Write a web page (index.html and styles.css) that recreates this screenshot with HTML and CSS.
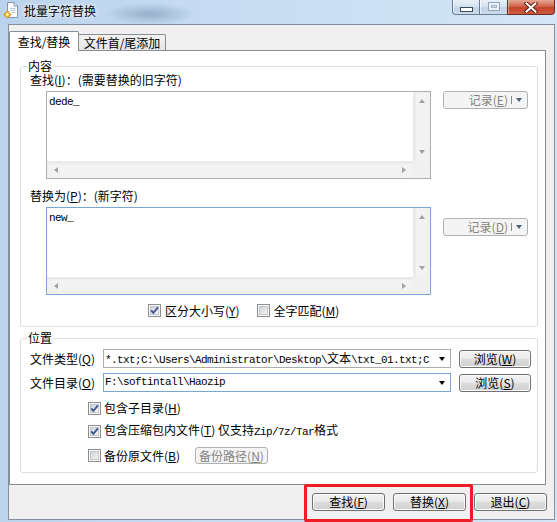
FILE: index.html
```html
<!DOCTYPE html>
<html lang="zh-CN">
<head>
<meta charset="utf-8">
<title>批量字符替换</title>
<link rel="stylesheet" href="styles.css">
</head>
<body>
<div class="window">
  <div class="titlebar">
    <svg class="app-icon" width="17" height="17" viewBox="0 0 17 17">
      <path d="M4.5 0.5 H11 L14.5 4 V15.5 H4.5 Z" fill="#fbfcfe" stroke="#8496b0"/>
      <path d="M11 0.5 V4 H14.5" fill="#dde6f1" stroke="#8496b0"/>
      <path d="M7 6.5 H12.5 M7 8.5 H12.5 M9 10.5 H12.5" stroke="#b8c8dc"/>
      <path d="M0.8 12.5 L4.5 8.8 L8.2 12.5 L4.5 16.2 Z" fill="#f6c12f" stroke="#c98a12" stroke-width="0.9"/>
      <path d="M3 12.5 L4.5 11 L6 12.5 L4.5 14 Z" fill="#ffffff"/>
    </svg>
    <span class="title">批量字符替换</span>
    <div class="controls">
      <div class="ctl ctl-min"><span class="min-glyph"></span></div>
      <div class="ctl ctl-max"><span class="max-glyph"></span></div>
      <div class="ctl ctl-close">
        <svg width="14" height="11" viewBox="0 0 14 11">
          <path d="M2.5 1.5 L11.5 9.5 M11.5 1.5 L2.5 9.5" stroke="#5a2116" stroke-width="4" stroke-linecap="square"/>
          <path d="M2.5 1.5 L11.5 9.5 M11.5 1.5 L2.5 9.5" stroke="#ffffff" stroke-width="2" stroke-linecap="square"/>
        </svg>
      </div>
    </div>
  </div>

  <div class="client">
    <div class="tabstrip">
      <div class="tab tab-active">查找/替换</div>
      <div class="tab tab-idle">文件首/尾添加</div>
    </div>

    <div class="panel">
      <fieldset class="group group-content">
        <legend>内容</legend>
        <div class="lbl">查找(<u>I</u>)：(需要替换的旧字符)</div>
        <div class="memo-row">
          <div class="memo">
            <div class="memo-text mono">dede_</div>
            <div class="vscroll"><span class="arr arr-up"></span><span class="arr arr-down"></span></div>
            <div class="hscroll"><span class="arr arr-left"></span><span class="arr arr-right"></span></div>
            <div class="corner"></div>
          </div>
          <div class="split-btn">
            <span>记录(<u>E</u>)</span><span class="sep"></span><span class="drop-arrow"></span>
          </div>
        </div>
        <div class="lbl lbl2">替换为(<u>P</u>)：(新字符)</div>
        <div class="memo-row">
          <div class="memo memo-focus">
            <div class="memo-text mono">new_</div>
            <div class="vscroll"><span class="arr arr-up"></span><span class="arr arr-down"></span></div>
            <div class="hscroll"><span class="arr arr-left"></span><span class="arr arr-right"></span></div>
            <div class="corner"></div>
          </div>
          <div class="split-btn split-btn-2">
            <span>记录(<u>D</u>)</span><span class="sep"></span><span class="drop-arrow"></span>
          </div>
        </div>
        <div class="check-row">
          <label class="check">
            <svg class="cb" width="13" height="13" viewBox="0 0 13 13"><rect x="0.5" y="0.5" width="12" height="12" fill="#f6f6f6" stroke="#8e8f8f"/><rect x="2.5" y="2.5" width="8" height="8" fill="url(#cbg)" stroke="#c3c7cc"/><path d="M3.2 6.4 L5.4 8.9 L9.9 3.4" fill="none" stroke="#3d5590" stroke-width="1.8"/></svg>
            <span>区分大小写(<u>Y</u>)</span>
          </label>
          <label class="check check-gap">
            <svg class="cb" width="13" height="13" viewBox="0 0 13 13"><rect x="0.5" y="0.5" width="12" height="12" fill="#f6f6f6" stroke="#8e8f8f"/><rect x="2.5" y="2.5" width="8" height="8" fill="url(#cbg)" stroke="#c3c7cc"/></svg>
            <span>全字匹配(<u>M</u>)</span>
          </label>
        </div>
      </fieldset>

      <fieldset class="group group-location">
        <legend>位置</legend>
        <div class="field-row">
          <span class="field-lbl">文件类型(<u>Q</u>)</span>
          <div class="combo">
            <span class="combo-text mono">*.txt;C:\Users\Administrator\Desktop\<span class="cjk">文本</span>\txt_01.txt;C</span>
            <span class="combo-arrow"></span>
          </div>
          <button class="btn btn-browse">浏览(<u>W</u>)</button>
        </div>
        <div class="field-row field-row-2">
          <span class="field-lbl">文件目录(<u>O</u>)</span>
          <div class="combo combo-focus">
            <span class="combo-text mono">F:\softintall\Haozip</span>
            <span class="combo-arrow"></span>
          </div>
          <button class="btn btn-browse">浏览(<u>S</u>)</button>
        </div>
        <label class="opt opt-a">
          <svg class="cb" width="13" height="13" viewBox="0 0 13 13"><rect x="0.5" y="0.5" width="12" height="12" fill="#f6f6f6" stroke="#8e8f8f"/><rect x="2.5" y="2.5" width="8" height="8" fill="url(#cbg)" stroke="#c3c7cc"/><path d="M3.2 6.4 L5.4 8.9 L9.9 3.4" fill="none" stroke="#3d5590" stroke-width="1.8"/></svg>
          <span>包含子目录(<u>H</u>)</span>
        </label>
        <label class="opt opt-b">
          <svg class="cb" width="13" height="13" viewBox="0 0 13 13"><rect x="0.5" y="0.5" width="12" height="12" fill="#f6f6f6" stroke="#8e8f8f"/><rect x="2.5" y="2.5" width="8" height="8" fill="url(#cbg)" stroke="#c3c7cc"/><path d="M3.2 6.4 L5.4 8.9 L9.9 3.4" fill="none" stroke="#3d5590" stroke-width="1.8"/></svg>
          <span>包含压缩包内文件(<u>T</u>) 仅支持<span class="mono-inline">Zip/7z/Tar</span>格式</span>
        </label>
        <div class="opt opt-c">
          <svg class="cb" width="13" height="13" viewBox="0 0 13 13"><rect x="0.5" y="0.5" width="12" height="12" fill="#f6f6f6" stroke="#8e8f8f"/><rect x="2.5" y="2.5" width="8" height="8" fill="url(#cbg)" stroke="#c3c7cc"/></svg>
          <span>备份原文件(<u>B</u>)</span>
          <button class="btn btn-disabled btn-backup">备份路径(<u>N</u>)</button>
        </div>
      </fieldset>
    </div>

    <div class="footer">
      <button class="btn btn-foot">查找(<u>F</u>)</button>
      <button class="btn btn-foot">替换(<u>X</u>)</button>
      <button class="btn btn-foot">退出(<u>C</u>)</button>
    </div>
  </div>

  <div class="highlight"></div>

  <svg class="defs" width="0" height="0">
    <defs>
      <linearGradient id="cbg" x1="0" y1="0" x2="1" y2="1">
        <stop offset="0" stop-color="#cdd1d6"/>
        <stop offset="1" stop-color="#f7f7f7"/>
      </linearGradient>
    </defs>
  </svg>
</div>
</body>
</html>
```

FILE: styles.css
```css
* { box-sizing: border-box; }

html, body {
  margin: 0;
  padding: 0;
}

body {
  width: 557px;
  height: 522px;
  overflow: hidden;
  background: #c4daf0;
  font-family: "Noto Sans CJK SC", "Noto Sans", sans-serif;
  font-size: 12px;
  line-height: 14px;
  color: #000;
}

.window {
  position: relative;
  width: 557px;
  height: 522px;
  display: flex;
  flex-direction: column;
  background: linear-gradient(to right, #bcd4ec, #c8ddf2 45%, #d2e5f7);
}

.defs { position: absolute; }

/* ---------- title bar ---------- */
.titlebar {
  height: 24px;
  display: flex;
  align-items: flex-start;
  background:
    radial-gradient(ellipse 45px 11px at 150px 14px, rgba(70, 100, 130, 0.35), rgba(70, 100, 130, 0) 100%),
    linear-gradient(to right, #bad3ec, #c6dcf2 40%, #d4e6f8);
}

.app-icon {
  margin: 2px 0 0 3px;
  flex: none;
}

.title {
  margin: 4px 0 0 4px;
  line-height: 14px;
  font-size: 12px;
  text-shadow: 0 0 6px rgba(255, 255, 255, 0.95), 0 0 3px rgba(255, 255, 255, 0.9);
}

.controls {
  margin-left: auto;
  margin-right: 2px;
  display: flex;
  height: 15px;
}

.ctl {
  height: 15px;
  display: flex;
  align-items: center;
  justify-content: center;
  border: 1px solid #6a7c93;
  border-top: none;
}

.ctl-min {
  width: 27px;
  border-right: none;
  border-bottom-left-radius: 4px;
  background: linear-gradient(#e7eef7, #d7e3f0 45%, #c3d4e7 55%, #cddbeb);
  box-shadow: inset 1px 0 0 rgba(255, 255, 255, 0.6);
}

.ctl-max {
  width: 28px;
  border-right: none;
  background: linear-gradient(#e7eef7, #d7e3f0 45%, #c3d4e7 55%, #cddbeb);
  box-shadow: inset 1px 0 0 rgba(255, 255, 255, 0.6);
}

.ctl-close {
  width: 48px;
  border-color: #6e2a1f;
  border-bottom-right-radius: 4px;
  background: linear-gradient(#e6a796, #d4644c 45%, #c3432a 55%, #cc5e42);
  box-shadow: inset 1px 0 0 rgba(255, 255, 255, 0.35);
}

.min-glyph {
  width: 13px;
  height: 5px;
  margin-top: 4px;
  background: #fff;
  border: 1px solid #3d4a5c;
}

.max-glyph {
  width: 12px;
  height: 9px;
  margin-bottom: 2px;
  border: 1px solid #96a6ba;
  box-shadow: inset 0 0 0 2px #e9eff6, inset 0 0 0 3px #a4b2c3;
}

/* ---------- client ---------- */
.client {
  flex: 1;
  margin: 0 2px 2px 8px;
  background: #f0f0f0;
  border: 1px solid #858f9c;
  display: flex;
  flex-direction: column;
}

.tabstrip {
  height: 25px;
  display: flex;
  align-items: flex-end;
}

.tab {
  border: 1px solid #898c95;
  border-bottom: none;
  text-align: center;
  white-space: nowrap;
}

.tab-active {
  position: relative;
  z-index: 1;
  width: 70px;
  height: 20px;
  margin-bottom: -1px;
  background: #fff;
  padding-top: 3px;
  border-radius: 2px 2px 0 0;
}

.tab-idle {
  width: 87px;
  height: 16px;
  border-left: none;
  background: linear-gradient(#f2f2f2, #e6e6e6);
  padding-top: 1px;
  border-radius: 0 2px 0 0;
}

.panel {
  width: 537px;
  height: 435px;
  border: 1px solid #898c95;
  background: #fff;
  padding: 8px 0 0 10px;
}

/* ---------- group boxes ---------- */
.group {
  margin: 0;
  padding: 0 0 9px 0;
  width: 518px;
  min-width: 0;
  border: 1px solid #d5dfe5;
  border-radius: 3px;
}

.group legend {
  margin-left: 6px;
  padding: 0 1px;
  line-height: 14px;
  height: 14px;
}

.group-location {
  margin-top: 4px;
  padding-bottom: 8px;
}

.lbl {
  padding-left: 9px;
  height: 14px;
  line-height: 14px;
}

.lbl2 {
  margin-top: 10px;
}

.memo-row {
  display: flex;
  align-items: flex-start;
  margin-top: 4px;
  padding-left: 25px;
}

.memo {
  width: 385px;
  height: 88px;
  border: 1px solid #abadb3;
  background: #fff;
  display: grid;
  grid-template-columns: 1fr 17px;
  grid-template-rows: 1fr 17px;
}

.memo-focus {
  border-color: #7aa6d6;
}

.memo-text {
  padding: 3px 2px;
}

.mono {
  font-family: "Liberation Mono", "Noto Sans CJK SC", monospace;
  font-size: 11px;
  letter-spacing: -0.6px;
}

.cjk {
  font-family: "Noto Sans CJK SC", sans-serif;
  font-size: 12px;
  letter-spacing: 0;
}

.mono-inline {
  font-family: "Liberation Mono", monospace;
  font-size: 11px;
  letter-spacing: -0.6px;
}

.vscroll {
  background: linear-gradient(to right, #e6e6e6, #f3f3f3 3px, #f1f1f1);
  border-left: 1px solid #ececec;
  display: flex;
  flex-direction: column;
  align-items: center;
  justify-content: space-between;
  padding: 7px 0 7px;
}

.hscroll {
  background: linear-gradient(#e6e6e6, #f3f3f3 3px, #f1f1f1);
  border-top: 1px solid #ececec;
  display: flex;
  align-items: center;
  justify-content: space-between;
  padding: 0 7px 0 7px;
}

.corner {
  background: #f0f0f0;
}

.arr {
  width: 0;
  height: 0;
  border-style: solid;
  border-color: transparent;
}

.arr-up { border-width: 0 3.5px 4px 3.5px; border-bottom-color: #a2a2a2; }
.arr-down { border-width: 4px 3.5px 0 3.5px; border-top-color: #a2a2a2; }
.arr-left { border-width: 3.5px 4px 3.5px 0; border-right-color: #a2a2a2; }
.arr-right { border-width: 3.5px 0 3.5px 4px; border-left-color: #a2a2a2; }

.split-btn {
  margin-left: 12px;
  width: 85px;
  height: 18px;
  border: 1px solid #adb2b5;
  border-radius: 3px;
  background: #f4f4f4;
  color: #838383;
  display: flex;
  align-items: center;
  justify-content: flex-end;
  padding-right: 5px;
}

.split-btn-2 {
  margin-top: 11px;
}

.sep {
  width: 1px;
  height: 8px;
  background: #8a8a8a;
  margin: 0 4px 0 3px;
}

.drop-arrow {
  width: 0;
  height: 0;
  border-style: solid;
  border-width: 4px 3.5px 0 3.5px;
  border-color: #4c5f80 transparent transparent transparent;
}

.check-row {
  display: flex;
  align-items: center;
  margin-top: 9px;
  padding-left: 127px;
  height: 13px;
}

.check {
  display: flex;
  align-items: center;
  gap: 4px;
}

.check-gap {
  margin-left: 17px;
}

.cb {
  flex: none;
  display: block;
}

/* ---------- location ---------- */
.field-row {
  display: flex;
  align-items: center;
  margin-top: 4px;
  padding-left: 9px;
  height: 19px;
}

.field-row-2 {
  margin-top: 5px;
}

.field-lbl {
  width: 73px;
  white-space: nowrap;
}

.combo {
  width: 348px;
  height: 19px;
  border: 1px solid #abadb3;
  background: #fff;
  display: flex;
  align-items: center;
  padding-left: 1px;
}

.combo-focus {
  border-color: #7aa6d6;
}

.combo-text {
  flex: 1;
  white-space: nowrap;
  line-height: 15px;
}

.combo-arrow {
  flex: none;
  width: 0;
  height: 0;
  margin: 1px 5px 0 4px;
  border-style: solid;
  border-width: 4px 3.5px 0 3.5px;
  border-color: #000 transparent transparent transparent;
}

.btn {
  font-family: "Noto Sans CJK SC", sans-serif;
  font-size: 12px;
  line-height: 14px;
  color: #000;
  padding: 0;
  border: 1px solid #707070;
  border-radius: 3px;
  background: linear-gradient(#f2f2f2, #ebebeb 45%, #dddddd 50%, #cfcfcf);
  box-shadow: inset 0 0 0 1px #fbfbfb;
  display: flex;
  align-items: center;
  justify-content: center;
}

.btn-browse {
  margin-left: 8px;
  width: 72px;
  height: 18px;
}

.btn-disabled {
  border-color: #adb2b5;
  background: #f4f4f4;
  box-shadow: none;
  color: #838383;
}

.opt {
  display: flex;
  align-items: center;
  gap: 3px;
  padding-left: 67px;
  height: 16px;
}

.opt-a { margin-top: 8px; }
.opt-b { margin-top: 7px; }
.opt-c { margin-top: 8px; height: 17px; }

.btn-backup {
  margin-left: 12px;
  width: 73px;
  height: 17px;
}

/* ---------- footer ---------- */
.footer {
  display: flex;
  justify-content: flex-end;
  gap: 8px;
  margin-top: 8px;
  padding-right: 7px;
}

.btn-foot {
  width: 73px;
  height: 18px;
}

/* ---------- annotation overlay ---------- */
.highlight {
  position: absolute;
  left: 304px;
  top: 484px;
  width: 169px;
  height: 38px;
  border: 3px solid #ee1c24;
  border-radius: 2px;
  pointer-events: none;
}
```
